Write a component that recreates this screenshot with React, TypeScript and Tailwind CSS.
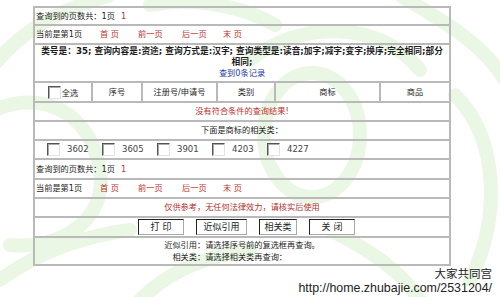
import React from "react";

// classic sunken checkbox
function Box() {
  return (
    <span className="inline-block w-[13px] h-[13px] shrink-0 bg-white border border-t-[#555] border-l-[#555] border-r-[#e2e2e2] border-b-[#e2e2e2] shadow-[inset_1px_1px_0_#aaa]" />
  );
}

function Btn({ label, w }: { label: string; w: string }) {
  return (
    <span
      className={`${w} h-[16px] flex items-center justify-center bg-white border border-t-[#222] border-l-[#222] border-r-[#aaa] border-b-[#aaa] text-[9px] leading-none text-[#222] whitespace-pre`}
    >
      {label}
    </span>
  );
}

function Watermark() {
  return (
    <svg
      className="absolute inset-0 pointer-events-none"
      width="500"
      height="297"
      viewBox="0 0 500 297"
      fill="none"
      stroke="#ebf7e5"
      strokeWidth="14"
      strokeLinecap="round"
    >
      <path d="M-10 70 C 20 30, 60 10, 110 -5" />
      <path d="M-5 110 C 40 90, 90 110, 100 170 C 108 220, 60 250, 10 245" />
      <path d="M150 5 C 200 -5, 250 10, 275 25" />
      <ellipse cx="312" cy="135" rx="48" ry="62" />
      <path d="M250 60 C 300 20, 380 20, 420 70" />
      <path d="M400 -5 C 440 20, 480 40, 505 80" />
      <path d="M455 95 C 500 140, 500 220, 470 280" />
      <path d="M0 280 C 40 250, 90 235, 130 230" />
      <path d="M330 230 C 370 250, 400 270, 420 300" />
      <path d="M140 300 C 170 270, 210 255, 250 250" />
    </svg>
  );
}

export default function App() {
  const red = "text-[#c0302c]";
  return (
    <div className="relative w-[500px] h-[297px] overflow-hidden bg-white font-['DejaVu_Sans','Noto_Sans_CJK_SC',sans-serif] text-[8.2px] text-[#1e1e1e]">
      <Watermark />

      <div className="relative ml-[33px] mt-[6px] w-[418px] border-2 border-[#b9b9b9]">
        {/* pages */}
        <div className="h-[18px] flex items-center pl-[1px] border-b-2 border-[#b9b9b9]">
          <span>查询到的页数共：1页</span>
          <span className={`ml-[6px] ${red}`}>1</span>
        </div>
        <div className="h-[19px] flex items-center pl-[1px] border-b-2 border-[#b9b9b9]">
          <span className="w-[64px]">当前是第1页</span>
          <span className={`w-[38px] ${red}`}>首 页</span>
          <span className={`w-[44px] ${red}`}>前一页</span>
          <span className={`w-[41px] ${red}`}>后一页</span>
          <span className={red}>末 页</span>
        </div>

        {/* query summary */}
        <div className="h-[38px] pt-[1px] text-center font-bold leading-[11px] border-b-2 border-[#b9b9b9] text-[8.7px]">
          <div className="whitespace-nowrap">
            类号是：35; 查询内容是:资途; 查询方式是:汉字; 查询类型是:读音;加字;减字;变字;换序;完全相同;部分
          </div>
          <div>相同;</div>
          <div className="font-normal text-[8.2px] text-[#2a3aa0]">查到0条记录</div>
        </div>

        {/* header */}
        <div className="h-[20px] flex border-b-2 border-[#b9b9b9]">
          <div className="w-[58px] flex items-center justify-center gap-[1px] border-r-2 border-[#b9b9b9]">
            <Box />
            <span className="mt-[3px]">全选</span>
          </div>
          <div className="w-[50px] flex items-center justify-center border-r-2 border-[#b9b9b9]">序号</div>
          <div className="w-[75px] flex items-center justify-center border-r-2 border-[#b9b9b9]">注册号/申请号</div>
          <div className="w-[58px] flex items-center justify-center border-r-2 border-[#b9b9b9]">类别</div>
          <div className="w-[105px] flex items-center justify-center border-r-2 border-[#b9b9b9]">商标</div>
          <div className="flex-1 flex items-center justify-center">商品</div>
        </div>

        <div className={`h-[19px] flex items-center justify-center border-b-2 border-[#b9b9b9] ${red}`}>
          没有符合条件的查询结果!
        </div>
        <div className="h-[19px] flex items-center justify-center border-b-2 border-[#b9b9b9]">
          下面是商标的相关类：
        </div>

        {/* related classes */}
        <div className="h-[19px] flex items-center pl-[12px] border-b-2 border-[#b9b9b9] text-[8.5px] text-[#444]">
          {["3602", "3605", "3901", "4203", "4227"].map((n) => (
            <div key={n} className="w-[55px] flex items-center gap-[7px]">
              <Box />
              <span>{n}</span>
            </div>
          ))}
        </div>

        <div className="h-[20px] flex items-center pl-[1px] border-b-2 border-[#b9b9b9]">
          <span>查询到的页数共：1页</span>
          <span className={`ml-[6px] ${red}`}>1</span>
        </div>
        <div className="h-[19px] flex items-center pl-[1px] border-b-2 border-[#b9b9b9]">
          <span className="w-[64px]">当前是第1页</span>
          <span className={`w-[38px] ${red}`}>首 页</span>
          <span className={`w-[44px] ${red}`}>前一页</span>
          <span className={`w-[41px] ${red}`}>后一页</span>
          <span className={red}>末 页</span>
        </div>

        <div className="h-[19px] flex items-center justify-center border-b-2 border-[#b9b9b9] text-[#b0302c]">
          仅供参考，无任何法律效力，请核实后使用
        </div>

        {/* buttons */}
        <div className="h-[20px] flex items-center justify-center gap-[12px] pl-[9px] border-b-2 border-[#b9b9b9]">
          <Btn label="打 印" w="w-[46px]" />
          <Btn label="近似引用" w="w-[51px]" />
          <Btn label="相关类" w="w-[38px]" />
          <Btn label="关 闭" w="w-[46px]" />
        </div>

        {/* notes */}
        <div className="h-[26px] pt-[2px] grid grid-cols-[auto_auto] justify-center leading-[11px]">
          <span className="text-right">近似引用：</span>
          <span>请选择序号前的复选框再查询。</span>
          <span className="text-right">相关类：</span>
          <span>请选择相关类再查询：</span>
        </div>
      </div>

      {/* site watermark */}
      <div className="relative mt-[2px] pr-[8px] text-right text-[#222] font-['Liberation_Sans','Noto_Sans_CJK_SC',sans-serif]">
        <div className="text-[11.5px] leading-[12px]">大家共同宫</div>
        <div className="text-[12.4px] leading-[16px]">http://home.zhubajie.com/2531204/</div>
      </div>
    </div>
  );
}
